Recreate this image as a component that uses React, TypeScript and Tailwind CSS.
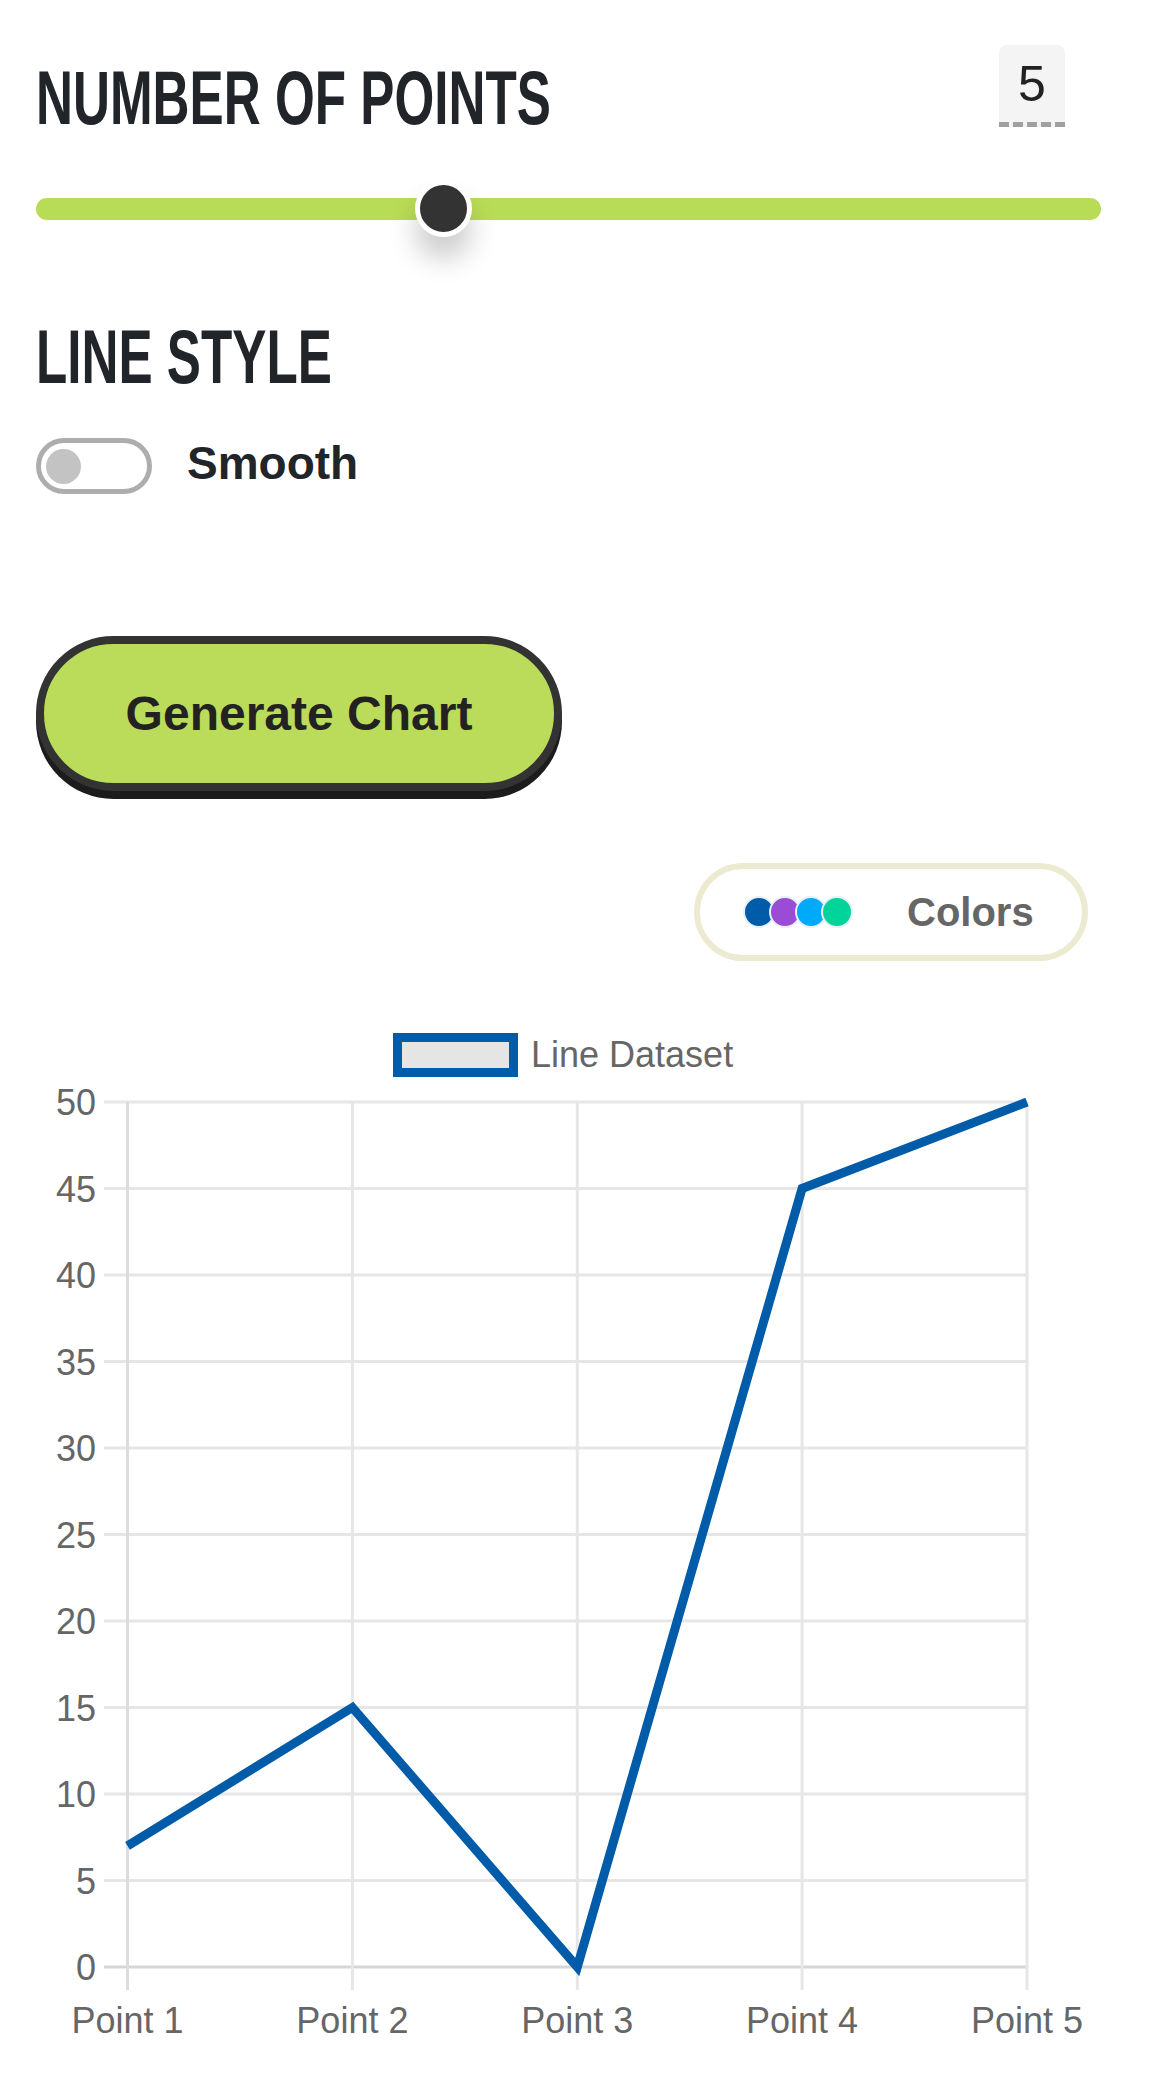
const values = [7, 15, 0, 45, 50];
const cols = [91.5, 316.4, 541.3, 766.1, 991];
const yTicks = [50, 45, 40, 35, 30, 25, 20, 15, 10, 5, 0];
const yOf = (v: number) => 102 + ((50 - v) / 5) * 86.5;
const swatches = ["#005ba8", "#9b4cd6", "#00aaf8", "#00d49a"];

export default function App() {
  return (
    <div className="min-h-screen bg-white font-['Liberation_Sans',Arial,sans-serif] text-[#212529]">
      <div className="w-[1105px] pl-[36px]">
        <div className="flex items-start justify-between pt-[45px]">
          <Heading className="mt-[21px]">NUMBER OF POINTS</Heading>
          <div className="mr-[40px] flex h-[82px] w-[66px] items-center justify-center rounded-t-lg border-b-[5px] border-dashed border-[#a0a0a0] bg-[#f4f4f4] text-[50px] leading-none text-[#222]">
            5
          </div>
        </div>

        <div className="relative mt-[50px] flex h-[57px] items-center">
          <div className="h-[22px] w-[1065px] rounded-full bg-[#b9dc56]" />
          <div className="absolute left-[379px] top-0 h-[57px] w-[57px] rounded-full border-[5px] border-white bg-[#333] shadow-[0_22px_28px_rgba(0,0,0,0.2)]" />
        </div>

        <Heading className="mt-[88px]">LINE STYLE</Heading>

        <div className="mt-[49px] flex items-center gap-[35px]">
          <div className="flex h-[56px] w-[116px] items-center rounded-full border-[5px] border-[#adadad] bg-white pl-[5px]">
            <div className="h-[35px] w-[35px] rounded-full bg-[#c3c3c3]" />
          </div>
          <span className="mb-[6px] text-[46px] font-bold leading-none">Smooth</span>
        </div>

        <button
          type="button"
          className="mt-[142px] block h-[155px] w-[526px] rounded-full border-[8px] border-[#333] bg-[#bbdc5a] text-[48px] font-bold text-[#222] shadow-[0_8px_0_#1c1c1c]"
        >
          Generate Chart
        </button>

        <div className="mt-[72px] flex justify-end pr-[17px]">
          <div className="flex h-[98px] w-[394px] items-center rounded-full border-[6px] border-[#ecebd2] pl-[43px]">
            <div className="flex">
              {swatches.map((c, i) => (
                <span
                  key={c}
                  className={`h-[32px] w-[32px] rounded-full border-2 border-[#e8eff7] ${i > 0 ? "-ml-[6px]" : ""}`}
                  style={{ backgroundColor: c }}
                />
              ))}
            </div>
            <span className="ml-[54px] text-[40px] font-bold leading-none text-[#666]">Colors</span>
          </div>
        </div>

        <div className="mt-[39px]">
          <LineChart />
        </div>
      </div>
    </div>
  );
}

function Heading({ children, className = "" }: { children: React.ReactNode; className?: string }) {
  return (
    <h2
      className={`origin-left scale-x-[0.8] scale-y-[1.2] whitespace-nowrap text-[64px] font-bold leading-none ${className}`}
    >
      {children}
    </h2>
  );
}

function LineChart() {
  const line = values.map((v, i) => `${cols[i]},${yOf(v)}`).join(" ");
  return (
    <svg width="1064" height="1060" viewBox="0 0 1064 1060" className="block">
      {/* legend */}
      <rect x="361.5" y="37.5" width="116" height="35" fill="#e5e5e5" stroke="#005ca8" strokeWidth="9" />
      <text x="495" y="67" fontSize="36" fill="#666" fontFamily="Liberation Sans, Arial, sans-serif">
        Line Dataset
      </text>

      {/* grid */}
      {yTicks.map((v) => (
        <line
          key={v}
          x1="68"
          x2="991"
          y1={yOf(v)}
          y2={yOf(v)}
          stroke={v === 0 ? "#d6d6d6" : "#e6e6e6"}
          strokeWidth="3"
        />
      ))}
      {cols.map((x, i) => (
        <line key={x} x1={x} x2={x} y1="102" y2="990" stroke={i === 0 ? "#dcdcdc" : "#e6e6e6"} strokeWidth="3" />
      ))}

      {/* y labels */}
      {yTicks.map((v) => (
        <text
          key={v}
          x="60"
          y={yOf(v) + 13}
          fontSize="36"
          fill="#666"
          textAnchor="end"
          fontFamily="Liberation Sans, Arial, sans-serif"
        >
          {v}
        </text>
      ))}

      {/* x labels */}
      {cols.map((x, i) => (
        <text
          key={x}
          x={x}
          y="1033"
          fontSize="36"
          fill="#666"
          textAnchor="middle"
          fontFamily="Liberation Sans, Arial, sans-serif"
        >
          Point {i + 1}
        </text>
      ))}

      <polyline points={line} fill="none" stroke="#005ca8" strokeWidth="9" strokeLinejoin="miter" strokeMiterlimit="10" />
    </svg>
  );
}
